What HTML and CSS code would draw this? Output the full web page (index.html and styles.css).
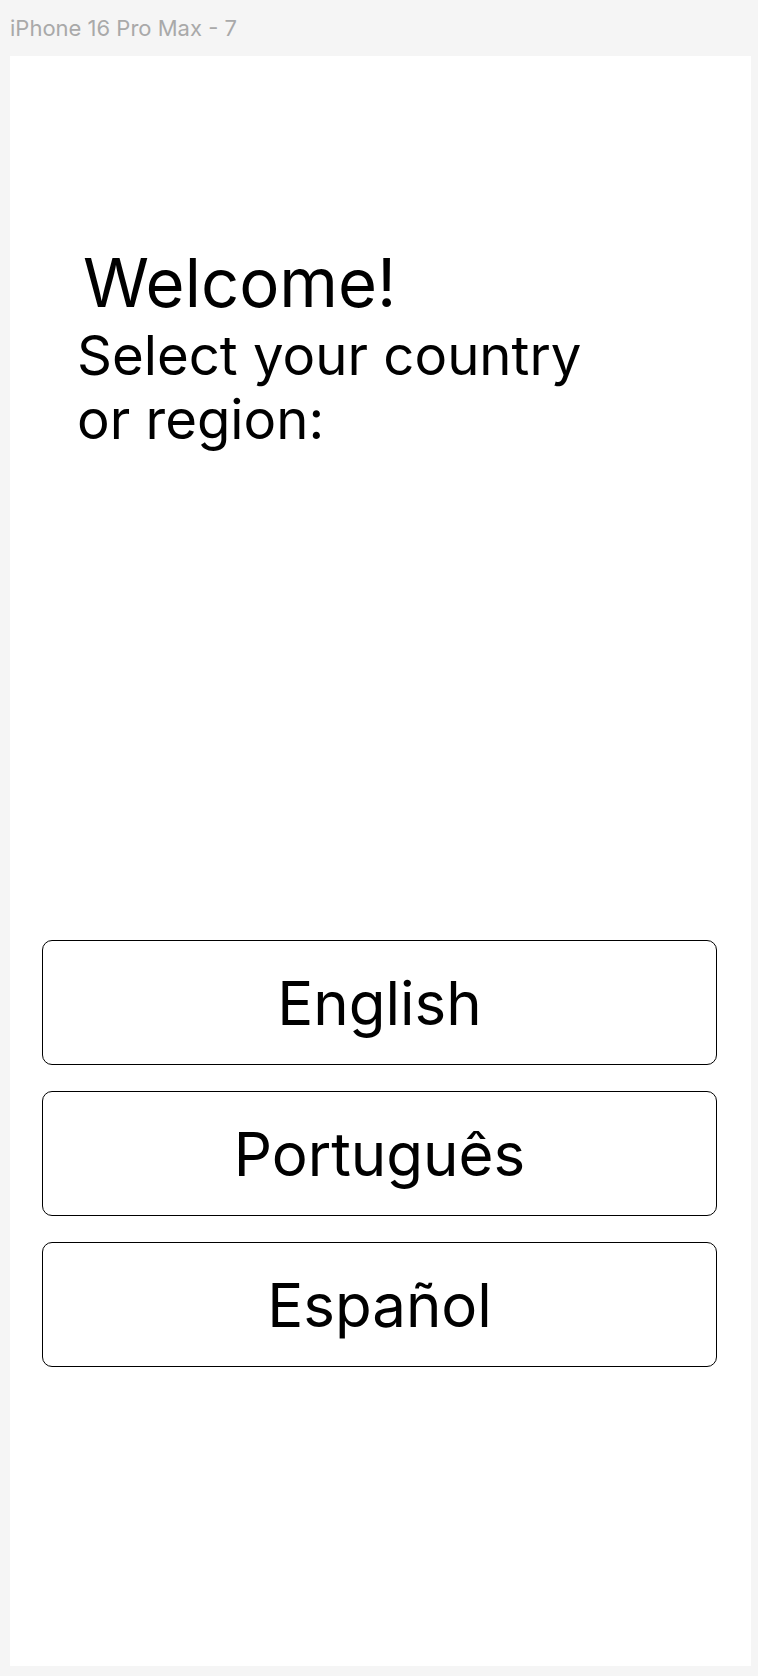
FILE: index.html
```html
<!DOCTYPE html>
<html lang="en">
<head>
<meta charset="utf-8">
<title>iPhone 16 Pro Max - 7</title>
<link rel="stylesheet" href="styles.css">
</head>
<body>
  <div class="label">iPhone 16 Pro Max - 7</div>
  <main class="frame">
    <section class="intro">
      <h1 class="welcome">Welcome!</h1>
      <p class="prompt">Select your country<br>or region:</p>
    </section>
    <div class="options">
      <button class="option" type="button">English</button>
      <button class="option" type="button">Português</button>
      <button class="option" type="button">Español</button>
    </div>
  </main>
</body>
</html>
```
FILE: styles.css
```css
html, body {
  margin: 0;
  padding: 0;
}

body {
  background: #f5f5f5;
  font-family: Inter, "Noto Sans", "Liberation Sans", sans-serif;
  color: #000;
  width: 758px;
  height: 1676px;
  overflow: hidden;
}

.label {
  height: 56px;
  line-height: 56px;
  padding-left: 10px;
  font-size: 22px;
  color: #a9a9a9;
  white-space: nowrap;
}

.frame {
  display: flex;
  flex-direction: column;
  margin-left: 10px;
  width: 741px;
  height: 1610px;
  background: #fff;
}

.intro {
  padding: 187px 0 0 67px;
}

.welcome {
  margin: 0 0 0 6px;
  font-size: 67px;
  font-weight: 400;
  line-height: 80px;
}

.prompt {
  margin: 0;
  font-size: 54.5px;
  line-height: 64px;
}

.options {
  display: flex;
  flex-direction: column;
  gap: 26px;
  margin-top: 489px;
  padding: 0 34px 0 32px;
}

.option {
  display: flex;
  align-items: center;
  justify-content: center;
  height: 125px;
  padding: 0;
  border: 1px solid #000;
  border-radius: 10px;
  background: #fff;
  font-family: inherit;
  font-size: 60px;
  color: #000;
}
```
